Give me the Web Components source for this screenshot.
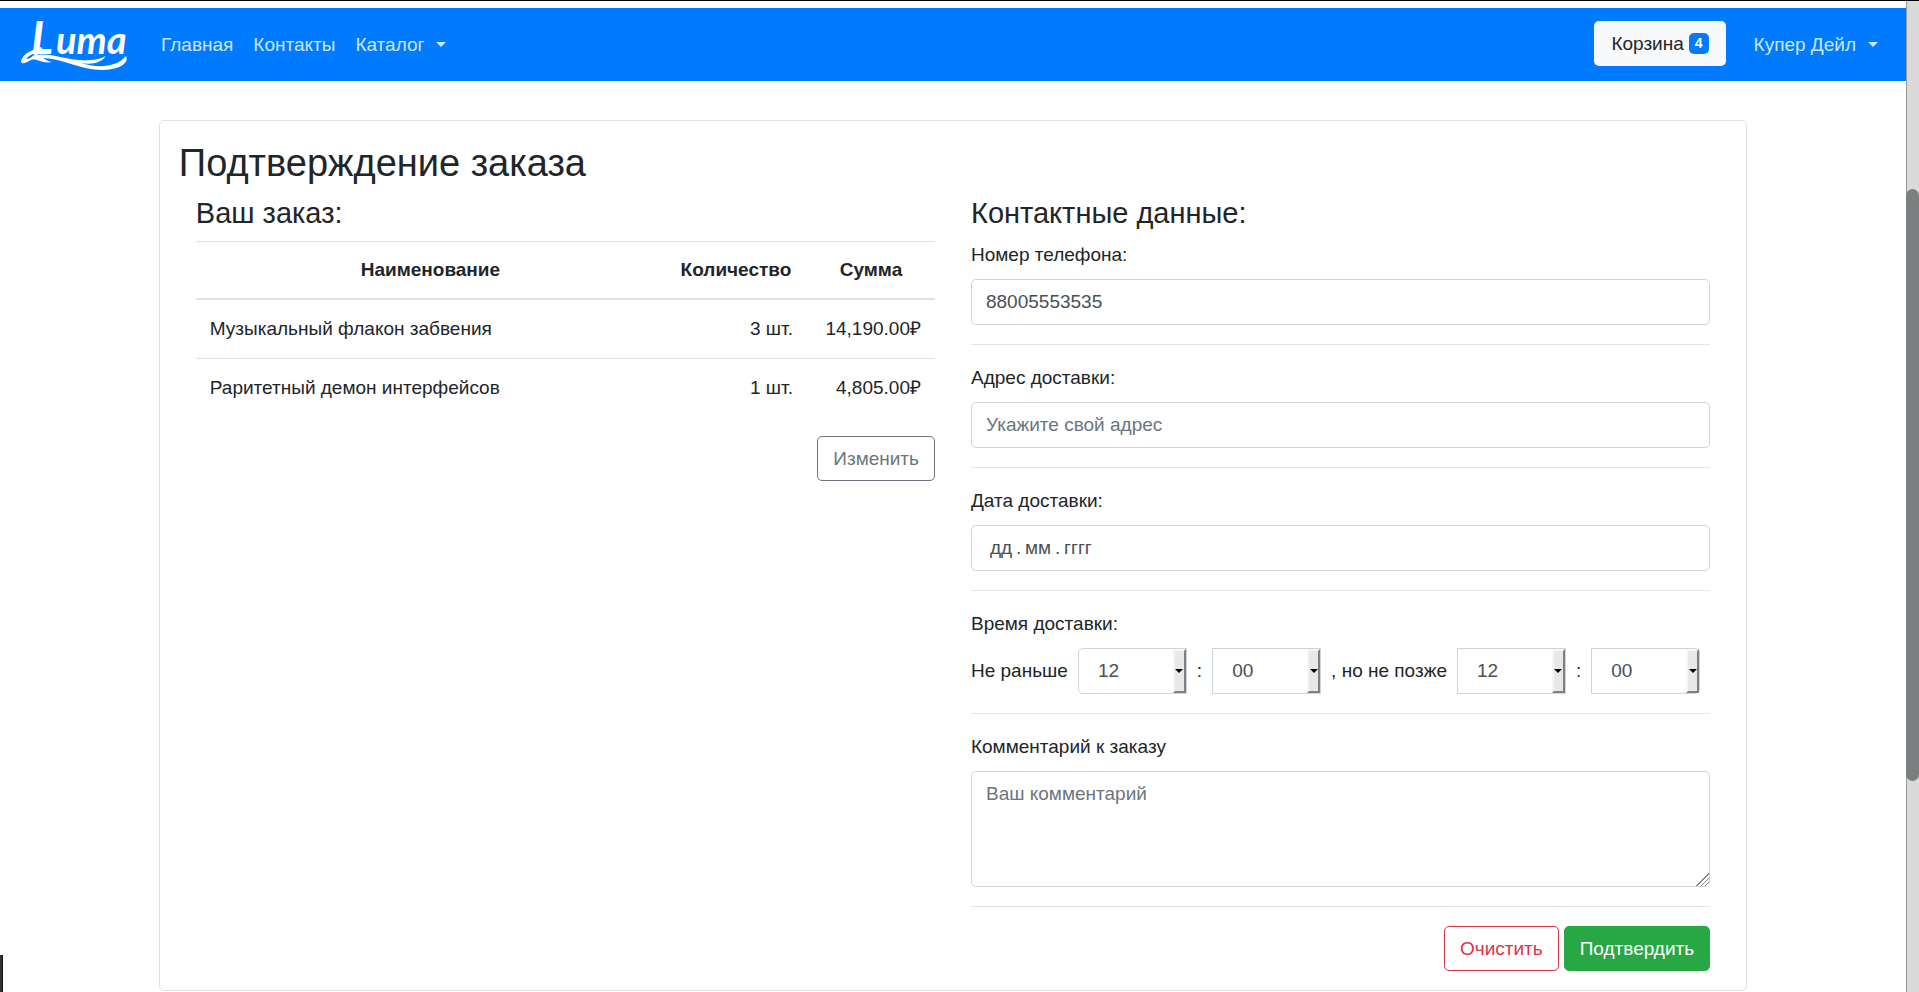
<!DOCTYPE html>
<html lang="ru">
<head>
<meta charset="utf-8">
<meta name="viewport" content="width=device-width, initial-scale=1">
<title>Luma — Подтверждение заказа</title>
<style>
  html { font-size: 19px; }
  body { margin: 0; font: 19px/28px "Liberation Sans", Arial, sans-serif; color: #212529; background: #fff; }
</style>
</head>
<body>
<app-shell>
  <nav-bar slot="header"></nav-bar>
  <order-card heading="Подтверждение заказа">
    <order-list slot="order"></order-list>
    <contact-form slot="contact"></contact-form>
  </order-card>
</app-shell>

<script>
const define = (name, html, setup) => {
  const template = document.createElement('template');
  template.innerHTML = '<style>*,*::before,*::after{box-sizing:border-box}:host{display:block}</style>' + html;
  customElements.define(name, class extends HTMLElement {
    constructor() {
      super();
      this.attachShadow({ mode: 'open' }).append(template.content.cloneNode(true));
    }
    connectedCallback() {
      if (setup && !this.ready) { this.ready = true; setup(this, this.shadowRoot); }
    }
  });
};

define('app-shell', `
<style>
  :host { display: flex; min-height: 100vh; border-top: 1px solid #000; box-sizing: border-box; }
  .page { flex: 1; min-width: 0; padding-top: 7px; }
  main { display: grid; grid-template-columns: 1fr 10fr 1fr; padding-top: 39px; }
  main slot { display: block; grid-column: 2; min-width: 0; }
  .track { flex: none; width: 13px; display: flex; flex-direction: column; background: #dadada; border-left: 1px solid #999; }
  .track::before { content: ""; flex: 188; }
  .thumb { flex: 592; margin-left: -1px; background: #7b7f7f; border-radius: 7px; }
  .track::after { content: ""; flex: 211; }
  .handle { position: fixed; left: 0; bottom: 0; width: 3px; height: 37px; background: #2e3436; border-right: 1px solid #111; }
</style>
<div class="page"><slot name="header"></slot><main><slot></slot></main></div>
<div class="track" aria-hidden="true"><div class="thumb"></div></div>
<div class="handle" aria-hidden="true"></div>`);

define('luma-logo', `
<style>
  svg { display: block; width: 110px; height: 54px; overflow: visible; }
  text { font-family: Lato, sans-serif; font-style: italic; font-weight: 700; fill: #fff; }
</style>
<svg viewBox="20 18 110 54" role="img" aria-label="Luma">
  <text x="32" y="54" font-size="46">L</text>
  <text x="57" y="54" font-size="38">uma</text>
  <path fill="#fff" fill-rule="evenodd" d="M22 61C24 54 32 50 42 47L44 50C42 52 40 54 38 55C52 53 64 59 80 60C91 61 100 60 107 56C102 63 93 65 82 63C98 68 117 68 127 56C130 62 123 69 105 70C84 71 66 59 44 58C47 60 49 61 53 62C43 64 38 58 32 60C27 63 22 65 22 61ZM27 59C31 59 34 56 37 53C33 54 29 56 27 59Z"/>
</svg>`);

define('nav-item', `
<style>
  a { display: flex; align-items: center; gap: 12px; padding: 9px; color: #cce5ff; text-decoration: none; white-space: nowrap; }
  :host([dropdown]) a::after { content: ""; border: 5px solid transparent; border-top-color: currentColor; border-bottom: 0; }
</style>
<a href="#"><slot></slot></a>`, (host, root) => { root.querySelector('a').href = host.getAttribute('href') || '#'; });

define('nav-bar', `
<style>
  nav { display: flex; align-items: center; height: 73px; padding: 0 19px; background: #007bff; }
  .brand { display: block; margin-right: 23px; }
  .links { display: flex; flex: 1; gap: 2px; }
  button { display: flex; align-items: center; gap: 5px; height: 45px; margin: 0 19px 2px 0; padding: 0 17px; border: 0; border-radius: 5px; background: #f8f9fa; color: #212529; font: inherit; }
  .badge { padding: 0 6px; border-radius: 5px; background: #007bff; color: #fff; font: bold 14px/21px "Liberation Sans", Arial, sans-serif; }
</style>
<nav>
  <a class="brand" href="#"><luma-logo></luma-logo></a>
  <div class="links">
    <nav-item>Главная</nav-item>
    <nav-item>Контакты</nav-item>
    <nav-item dropdown>Каталог</nav-item>
  </div>
  <button type="button">Корзина <span class="badge">4</span></button>
  <nav-item dropdown>Купер Дейл</nav-item>
</nav>`);

define('order-card', `
<style>
  section { padding: 19px; border: 1px solid #dfdfdf; border-radius: 5px; background: #fff; }
  h1 { margin: 0 0 9px; font-size: 38px; line-height: 46px; font-weight: 400; }
  .columns { display: grid; grid-template-columns: repeat(2, minmax(0, 1fr)); gap: 36px; padding: 0 17px; }
</style>
<section>
  <h1></h1>
  <div class="columns"><slot name="order"></slot><slot name="contact"></slot></div>
</section>`, (host, root) => { root.querySelector('h1').textContent = host.getAttribute('heading'); });

define('ui-button', `
<style>
  button { display: block; height: 45px; padding: 0 15px; border: 1px solid var(--tone); border-radius: 5px; background: transparent; color: var(--tone); font: inherit; }
  :host { --tone: #6c757d; }
  :host([kind="danger"]) { --tone: #dc3545; }
  :host([kind="success"]) { --tone: #28a745; }
  :host([kind="success"]) button { background: var(--tone); color: #fff; }
</style>
<button type="button"><slot></slot></button>`);

define('order-list', `
<style>
  h2 { margin: 0 0 10px; font-size: 29px; line-height: 36px; font-weight: 400; }
  table { width: 100%; border-collapse: collapse; }
  th, td { padding: 15px 14px; border-top: 1px solid #dee2e6; text-align: right; white-space: nowrap; }
  th { text-align: center; border-bottom: 2px solid #dee2e6; padding: 14px; }
  th:first-child { width: 100%; }
  th:nth-child(2) { min-width: 142px; }
  th:nth-child(3) { min-width: 128px; }
  td:first-child { text-align: left; }
  .actions { display: flex; justify-content: flex-end; margin-top: 19px; }
</style>
<h2>Ваш заказ:</h2>
<table>
  <thead><tr><th>Наименование</th><th>Количество</th><th>Сумма</th></tr></thead>
  <tbody>
    <tr><td>Музыкальный флакон забвения</td><td>3 шт.</td><td>14,190.00₽</td></tr>
    <tr><td>Раритетный демон интерфейсов</td><td>1 шт.</td><td>4,805.00₽</td></tr>
  </tbody>
</table>
<div class="actions"><ui-button>Изменить</ui-button></div>`);

define('form-field', `
<style>
  :host { padding-bottom: 19px; margin-bottom: 19px; border-bottom: 1px solid #e5e5e5; }
  label { display: block; margin-bottom: 10px; }
  input, textarea { display: block; width: 100%; height: 46px; margin: 0; padding: 8px 14px; border: 1px solid #ced4da; border-radius: 5px; background: #fff; color: #495057; font: inherit; }
  textarea { height: 116px; resize: vertical; }
  ::placeholder { color: #6c757d; opacity: 1; }
  :host([date]) input { padding-left: 18px; }
  :host([date]) ::placeholder { color: #495057; }
  textarea::-webkit-resizer { background: linear-gradient(135deg, #fff 50%, transparent 50%), repeating-linear-gradient(135deg, #888 0 1px, #fff 1px 3px); }
</style>
<label for="control"></label>`, (host, root) => {
  root.querySelector('label').textContent = host.getAttribute('label');
  const control = document.createElement(host.hasAttribute('multiline') ? 'textarea' : 'input');
  control.id = 'control';
  if (host.hasAttribute('type')) control.type = host.getAttribute('type');
  control.placeholder = host.getAttribute('placeholder') || '';
  control.value = host.getAttribute('value') || '';
  root.append(control);
});

define('time-select', `
<style>
  :host { position: relative; flex: 0 1 109px; min-width: 0; }
  select { appearance: none; display: block; width: 100%; height: 46px; margin: 0; padding: 0 19px; border: 1px solid #ced4da; border-radius: var(--corners, 0); background: #fff; color: #495057; font: inherit; }
  .arrow { position: absolute; top: 1px; right: 1px; bottom: 1px; width: 13px; display: grid; place-items: center; background: #e8e8e8; border: 2px solid; border-color: #f5f6f8 #808080 #808080 #f5f6f8; pointer-events: none; }
  .arrow::after { content: ""; border: 4px solid transparent; border-top-color: #000; border-bottom: 0; }
</style>
<select></select><span class="arrow"></span>`, (host, root) => {
  const select = root.querySelector('select');
  select.setAttribute('aria-label', host.getAttribute('label'));
  const count = host.getAttribute('unit') === 'hour' ? 24 : 60;
  for (let i = 0; i < count; i++) select.add(new Option(String(i).padStart(2, '0')));
  select.value = host.getAttribute('value');
});

define('contact-form', `
<style>
  h2 { margin: 0 0 10px; font-size: 29px; line-height: 36px; font-weight: 400; }
  fieldset { min-width: 0; margin: 0 0 19px; padding: 0 0 19px; border: 0; border-bottom: 1px solid #e5e5e5; }
  legend { padding: 0; margin-bottom: 10px; }
  .times { display: flex; align-items: center; gap: 10px; padding-right: 10px; white-space: nowrap; }
  .colon { flex: 1; text-align: center; }
  .first { --corners: 5px 0 0 5px; }
  .last { --corners: 0 5px 5px 0; }
  .actions { display: flex; justify-content: flex-end; gap: 5px; }
</style>
<h2>Контактные данные:</h2>
<form>
  <form-field label="Номер телефона:" type="tel" value="88005553535"></form-field>
  <form-field label="Адрес доставки:" placeholder="Укажите свой адрес"></form-field>
  <form-field date label="Дата доставки:" placeholder="дд&thinsp;.&thinsp;мм&thinsp;.&thinsp;гггг"></form-field>
  <fieldset>
    <legend>Время доставки:</legend>
    <div class="times">
      <span>Не раньше</span>
      <time-select class="first" unit="hour" value="12" label="Не раньше, часы"></time-select>
      <span class="colon">:</span>
      <time-select unit="minute" value="00" label="Не раньше, минуты"></time-select>
      <span>, но не позже</span>
      <time-select unit="hour" value="12" label="Не позже, часы"></time-select>
      <span class="colon">:</span>
      <time-select class="last" unit="minute" value="00" label="Не позже, минуты"></time-select>
    </div>
  </fieldset>
  <form-field multiline label="Комментарий к заказу" placeholder="Ваш комментарий"></form-field>
  <div class="actions">
    <ui-button kind="danger">Очистить</ui-button>
    <ui-button kind="success">Подтвердить</ui-button>
  </div>
</form>`);
</script>
</body>
</html>
